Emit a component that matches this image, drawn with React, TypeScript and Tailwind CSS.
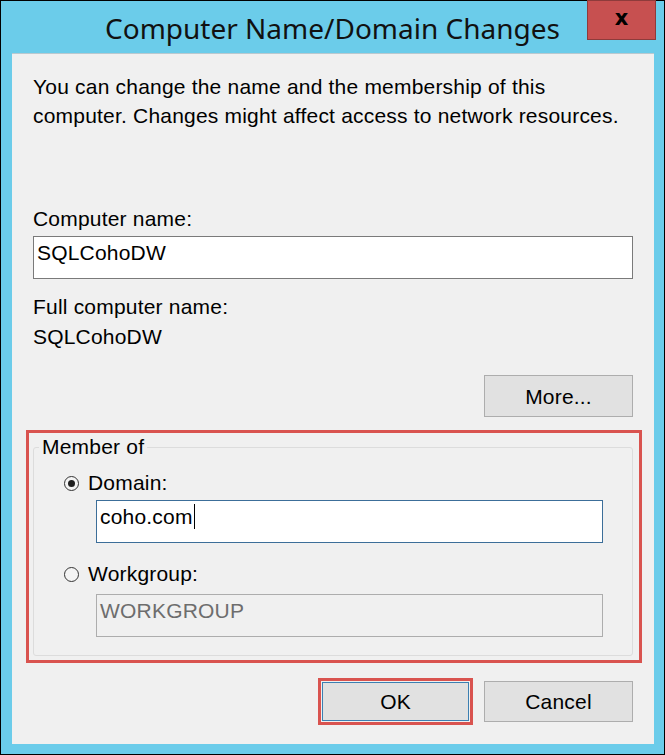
import React from "react";

const sans = { fontFamily: '"Liberation Sans", Arial, sans-serif' };

function Radio({ checked }: { checked: boolean }) {
  return (
    <span className="w-[15px] h-[15px] rounded-full border border-[#333333] bg-[#F4F4F4] flex items-center justify-center shrink-0">
      {checked && <span className="w-[7px] h-[7px] rounded-full bg-[#1F1F1F]" />}
    </span>
  );
}

export default function App() {
  return (
    <div
      className="w-[665px] h-[755px] bg-[#6BCCEA] border border-black relative flex flex-col"
      style={sans}
    >
      <div className="h-[52px] flex items-center justify-center shrink-0">
        <span
          className="text-[28px] text-[#111] leading-none pt-[2px]"
          style={{ fontFamily: '"Noto Sans", "Open Sans", sans-serif' }}
        >
          Computer Name/Domain Changes
        </span>
      </div>
      <div className="absolute right-[8px] top-[-1px] w-[69px] h-[40px] bg-[#C75050] border border-[#8E3B3B] flex items-center justify-center">
        <span className="text-[21px] font-bold text-black leading-none pb-[3px]" style={{ fontFamily: '"DejaVu Sans", sans-serif' }}>
          x
        </span>
      </div>
      <div className="ml-[11px] mr-[10px] h-[691px] bg-[#F0F0F0] border-t border-[#B9C9D0] flex flex-col text-[21px] tracking-[0.2px] leading-[29px] text-black">
        <div className="px-[21px] pt-[18px]">
          <p>You can change the name and the membership of this</p>
          <p>computer. Changes might affect access to network resources.</p>
          <p className="mt-[74px]">Computer name:</p>
          <div className="mt-[3px] h-[43px] bg-white border border-[#7A7A7A] px-[3px] pt-[1px]">
            SQLCohoDW
          </div>
          <p className="mt-[13px]">Full computer name:</p>
          <p className="mt-[1px]">SQLCohoDW</p>
          <div className="flex justify-end mt-[24px]">
            <div className="w-[149px] h-[42px] bg-[#E1E1E1] border border-[#ADADAD] flex items-center justify-center">
              More...
            </div>
          </div>
        </div>
        <div className="mt-[13px] ml-[14px] mr-[12px] h-[233px] border-[3px] border-[#D9534F] pl-[4px] pr-[6px] pt-[3px]">
          <fieldset className="border border-[#DCDCDC] rounded-[3px] h-[220px] p-0">
            <legend className="ml-[5px] px-[3px] leading-[22px]">Member of</legend>
            <div className="pl-[30px] pr-[29px]">
              <div className="flex items-center gap-[9px] mt-[14px] leading-[22px]">
                <Radio checked />
                <span>Domain:</span>
              </div>
              <div className="mt-[6px] ml-[32px] h-[43px] bg-white border border-[#3C6E99] px-[3px] pt-[1px] flex items-start">
                <span>coho.com</span>
                <span className="w-px h-[25px] bg-black mt-[2px] ml-px" />
              </div>
              <div className="flex items-center gap-[9px] mt-[20px] leading-[22px]">
                <Radio checked={false} />
                <span>Workgroup:</span>
              </div>
              <div className="mt-[9px] ml-[32px] h-[43px] bg-[#F0F0F0] border border-[#ADADAD] px-[3px] pt-[1px] text-[#6D6D6D]">
                WORKGROUP
              </div>
            </div>
          </fieldset>
        </div>
        <div className="flex justify-end items-center gap-[11px] mt-[15px] pr-[21px]">
          <div className="w-[155px] h-[47px] border-[3px] border-[#D9534F] p-px">
            <div className="w-full h-full bg-[#E1E1E1] border border-[#3C7FB1] flex items-center justify-center">
              OK
            </div>
          </div>
          <div className="w-[149px] h-[41px] bg-[#E1E1E1] border border-[#ADADAD] flex items-center justify-center">
            Cancel
          </div>
        </div>
      </div>
    </div>
  );
}
